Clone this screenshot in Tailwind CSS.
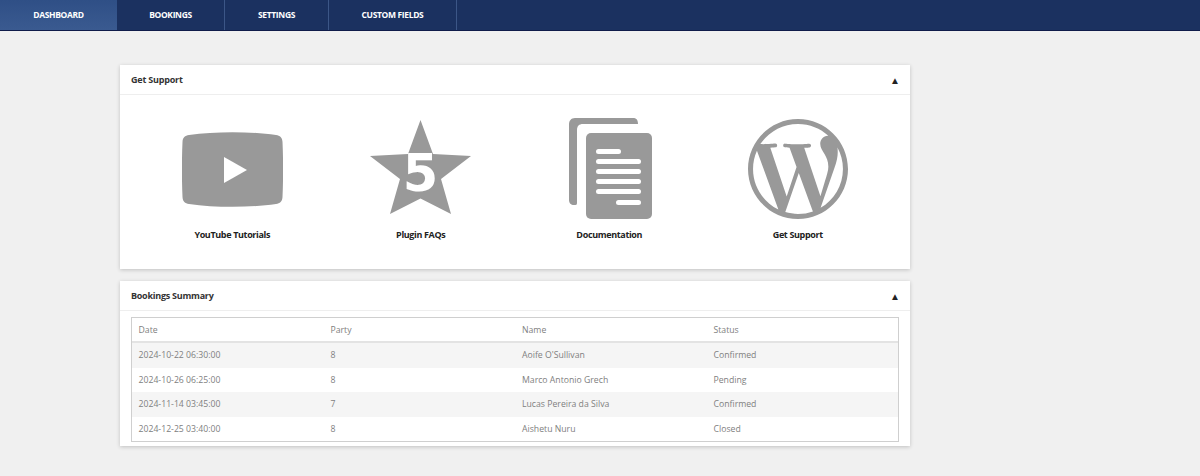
<!DOCTYPE html>
<html lang="en">
  <head>
    <meta charset="UTF-8" />
    <meta name="viewport" content="width=device-width, initial-scale=1.0" />
    <title>Dashboard</title>
    <script src="https://cdn.jsdelivr.net/npm/@tailwindcss/browser@4"></script>
  </head>
  <body class="bg-[#f0f0f0] font-['Open_Sans',sans-serif] h-[476px] overflow-hidden">
    <!-- top nav -->
    <nav class="flex h-[31px] bg-[#1b3160] border-b border-[#101c4a] text-white text-[8.5px] font-bold uppercase tracking-[-0.35px]">
      <a class="flex items-center justify-center w-[117px] bg-gradient-to-b from-[#2f4f86] to-[#3a5a90]">Dashboard</a>
      <a class="flex items-center justify-center w-[108px] border-r border-[#3c5687]">Bookings</a>
      <a class="flex items-center justify-center w-[104px] border-r border-[#3c5687]">Settings</a>
      <a class="flex items-center justify-center w-[128px] border-r border-[#3c5687]">Custom Fields</a>
    </nav>

    <main class="w-[790px] ml-[120px] mt-[34px] flex flex-col gap-[12px]">
      <!-- support panel -->
      <section class="bg-white shadow-[0_1px_4px_rgba(0,0,0,0.2)] h-[204px]">
        <header class="flex items-center justify-between h-[30px] pl-[11px] pr-[10px] border-b border-[#eeeeee]">
          <h2 class="text-[9px] font-bold tracking-[-0.2px] text-[#333]">Get Support</h2>
          <span class="text-[10px] leading-none text-[#222]">▲</span>
        </header>
        <div class="grid grid-cols-4 px-[18px] pt-[23px] text-[#999]">
          <a class="flex flex-col items-center">
            <div class="h-[101px] flex items-start justify-center">
              <svg class="mt-[14px]" width="101" height="75" viewBox="0 0 101 75">
                <path fill="#999999" d="M7 3C33-.8 68-.8 94 3c4 .6 6.300 2.500 6.500 7 .8 18 .8 37 0 55-.2 4.500-2.500 6.400-6.500 7-26 3.800-61 3.800-87 0-4-.6-6.300-2.500-6.500-7-.8-18-.8-37 0-55C.7 5.500 3 3.600 7 3z"/>
                <path fill="#ffffff" d="M42 25l23 13-23 13z"/>
              </svg>
            </div>
            <span class="mt-[9px] text-[9px] font-bold tracking-[-0.35px] text-[#222]">YouTube Tutorials</span>
          </a>
          <a class="flex flex-col items-center">
            <div class="h-[101px] flex items-start justify-center">
              <svg class="mt-[2px]" width="101" height="96" viewBox="0 0 101 96">
                <path fill="#999999" d="M50.500 0l12.500 34 38 2-30 23 10 35-30.500-15.500-30.500 15.500 10-35-30-23 38-2z"/>
                <text x="50.500" y="71" text-anchor="middle" fill="#ffffff" font-family="'DejaVu Sans',sans-serif" font-weight="900" font-size="51">5</text>
              </svg>
            </div>
            <span class="mt-[9px] text-[9px] font-bold tracking-[-0.35px] text-[#222]">Plugin FAQs</span>
          </a>
          <a class="flex flex-col items-center">
            <div class="h-[101px] flex items-start justify-center">
              <svg class="ml-[2px]" width="83" height="101" viewBox="0 0 83 101">
                <path fill="#999999" d="M6 0h58c3 0 5 1.500 5 6H14c-4 0-6 2-6 6v73c0 2-1 2-3 2-3 0-5-2-5-5V6c0-3 2-6 6-6z"/>
                <rect x="17" y="15" width="66" height="86" rx="5" fill="#999999"/>
                <g fill="#ffffff">
                  <rect x="27" y="31" width="25" height="5" rx="2.500"/>
                  <rect x="27" y="41" width="45" height="5" rx="2.500"/>
                  <rect x="27" y="51" width="45" height="5" rx="2.500"/>
                  <rect x="27" y="61" width="45" height="5" rx="2.500"/>
                  <rect x="27" y="71" width="45" height="5" rx="2.500"/>
                  <rect x="47" y="82" width="25" height="5" rx="2.500"/>
                </g>
              </svg>
            </div>
            <span class="mt-[9px] text-[9px] font-bold tracking-[-0.35px] text-[#222]">Documentation</span>
          </a>
          <a class="flex flex-col items-center">
            <div class="h-[101px] flex items-start justify-center">
              <svg class="mt-[1px]" width="100" height="100" viewBox="0 0 24 24">
                <path fill="#999999" d="M21.469 6.825c.84 1.537 1.318 3.3 1.318 5.175 0 3.979-2.156 7.456-5.363 9.325l3.295-9.527c.615-1.54.82-2.771.82-3.864 0-.405-.026-.78-.07-1.11m-7.981.105c.647-.03 1.232-.105 1.232-.105.582-.075.514-.93-.067-.899 0 0-1.755.135-2.88.135-1.064 0-2.85-.15-2.85-.15-.585-.03-.661.855-.075.885 0 0 .54.061 1.125.09l1.68 4.605-2.37 7.08L5.354 6.9c.649-.03 1.234-.1 1.234-.1.585-.075.516-.93-.065-.896 0 0-1.746.138-2.874.138-.2 0-.438-.008-.69-.015C4.911 3.15 8.235 1.215 12 1.215c2.809 0 5.365 1.072 7.286 2.833-.046-.003-.091-.009-.141-.009-1.06 0-1.812.923-1.812 1.914 0 .89.513 1.643 1.06 2.531.411.72.89 1.643.89 2.977 0 .915-.354 1.994-.821 3.479l-1.075 3.585-3.9-11.61.001.014zM12 22.784c-1.059 0-2.081-.153-3.048-.437l3.237-9.406 3.315 9.087c.024.053.05.101.078.149-1.12.393-2.325.609-3.582.609M1.211 12c0-1.564.336-3.05.935-4.39L7.29 21.709C3.694 19.96 1.212 16.271 1.21 12M12 0C5.385 0 0 5.385 0 12s5.385 12 12 12 12-5.385 12-12S18.615 0 12 0"/>
              </svg>
            </div>
            <span class="mt-[9px] text-[9px] font-bold tracking-[-0.35px] text-[#222]">Get Support</span>
          </a>
        </div>
      </section>

      <!-- bookings panel -->
      <section class="bg-white shadow-[0_1px_4px_rgba(0,0,0,0.2)] h-[165px]">
        <header class="flex items-center justify-between h-[30px] pl-[11px] pr-[10px] border-b border-[#eeeeee]">
          <h2 class="text-[9px] font-bold tracking-[-0.25px] text-[#333]">Bookings Summary</h2>
          <span class="text-[10px] leading-none text-[#222]">▲</span>
        </header>
        <div class="mx-[11px] mt-[6px] border border-[#cfcfcf] text-[8.700px] text-[#808080]">
          <div class="grid grid-cols-[192px_191.500px_191.500px_1fr] items-center h-[25px] pl-[6.500px] pt-[1.500px] border-b-2 border-[#e3e3e3]">
            <span>Date</span><span>Party</span><span>Name</span><span>Status</span>
          </div>
          <div class="grid grid-cols-[192px_191.500px_191.500px_1fr] items-center h-[24.500px] pl-[6.500px] pt-[1.500px] bg-[#f5f5f5]">
            <span>2024-10-22 06:30:00</span><span>8</span><span>Aoife O'Sullivan</span><span>Confirmed</span>
          </div>
          <div class="grid grid-cols-[192px_191.500px_191.500px_1fr] items-center h-[24.500px] pl-[6.500px] pt-[1.500px]">
            <span>2024-10-26 06:25:00</span><span>8</span><span>Marco Antonio Grech</span><span>Pending</span>
          </div>
          <div class="grid grid-cols-[192px_191.500px_191.500px_1fr] items-center h-[24.500px] pl-[6.500px] pt-[1.500px] bg-[#f5f5f5]">
            <span>2024-11-14 03:45:00</span><span>7</span><span>Lucas Pereira da Silva</span><span>Confirmed</span>
          </div>
          <div class="grid grid-cols-[192px_191.500px_191.500px_1fr] items-center h-[24.500px] pl-[6.500px] pt-[1.500px]">
            <span>2024-12-25 03:40:00</span><span>8</span><span>Aishetu Nuru</span><span>Closed</span>
          </div>
        </div>
      </section>
    </main>
  </body>
</html>
